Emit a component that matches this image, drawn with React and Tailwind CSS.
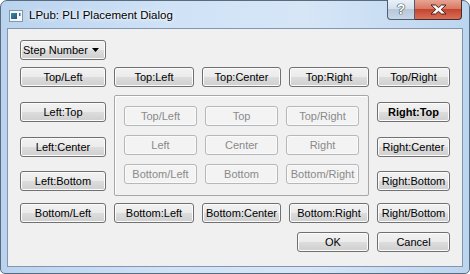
import React from 'react';

const btn =
  "h-[20px] flex items-center justify-center rounded-[3px] border border-[#707070] bg-[linear-gradient(to_bottom,#f2f2f2_0%,#ebebeb_50%,#dddddd_50%,#cfcfcf_100%)] shadow-[inset_0_0_0_1px_#fbfbfb] text-[11px] text-black leading-none";

const off =
  "h-[20px] flex items-center justify-center rounded-[3px] border border-[#b4b8bb] bg-[#f3f3f3] shadow-[inset_0_0_0_1px_#fafafa] text-[11px] text-[#8a8a8a] leading-none";

const Btn = ({ children, className = '' }) => (
  <div className={`${btn} ${className}`}>{children}</div>
);

const Off = ({ children }) => <div className={off}>{children}</div>;

const WindowIcon = () => (
  <svg width="14" height="12" viewBox="0 0 14 12">
    <rect x="0.5" y="0.5" width="13" height="11" fill="#f4f6f8" stroke="#8a96a3" />
    <defs>
      <linearGradient id="ic" x1="0" y1="0" x2="1" y2="1">
        <stop offset="0" stopColor="#2d8fa0" />
        <stop offset="1" stopColor="#2b4f8c" />
      </linearGradient>
    </defs>
    <rect x="2" y="3" width="6" height="6" fill="url(#ic)" />
    <rect x="10" y="3" width="1.5" height="3" fill="#3a6a9a" />
  </svg>
);

const CloseX = () => (
  <svg width="17" height="11" viewBox="0 0 17 11">
    <polygon
      points="1,1 5.5,1 8.5,3.6 11.5,1 16,1 11.2,5.5 16,10 11.5,10 8.5,7.4 5.5,10 1,10 5.8,5.5"
      fill="#ffffff"
      stroke="#4a1d16"
      strokeWidth="1"
      strokeLinejoin="round"
    />
  </svg>
);

export default function App() {
  return (
    <div className="w-[470px] h-[274px] bg-white font-['Liberation_Sans',Arial,sans-serif]">
      <div className="w-full h-full flex flex-col rounded-t-[7px] rounded-b-[5px] border border-[#5a6b80] bg-[linear-gradient(to_right,#b9d3ef_0%,#cfe2f6_35%,#d6e6f7_65%,#bcd5ef_100%)]">
        {/* title bar */}
        <div className="h-[27px] flex items-start shrink-0">
          <div className="ml-[8px] mt-[9px]">
            <WindowIcon />
          </div>
          <div className="ml-[6px] mt-[6px] text-[11.5px] text-black [text-shadow:0_0_6px_#fff,0_0_3px_#fff]">
            LPub: PLI Placement Dialog
          </div>
          <div className="ml-auto mr-[7px] -mt-[1px] flex h-[20px]">
            <div className="w-[28px] h-full flex items-center justify-center rounded-bl-[4px] border border-t-0 border-[#4c5d74] bg-[linear-gradient(to_bottom,#e9f0f8_0%,#d3dfec_50%,#b7c8dc_50%,#c9d7e6_100%)] text-[14px] font-bold text-white [text-shadow:0_0_1px_#233,0_0_1px_#233,0_0_1px_#233]">
              ?
            </div>
            <div className="w-[47px] h-full flex items-center justify-center rounded-br-[4px] border border-t-0 border-l-0 border-[#4c2a24] bg-[linear-gradient(to_bottom,#e8a493_0%,#d67560_50%,#c6452e_50%,#d6705a_100%)]">
              <CloseX />
            </div>
          </div>
        </div>

        {/* client area */}
        <div className="flex-1 mx-[6px] mb-[6px] border border-[#8396ae] bg-[#f0f0f0] pt-[11px] pl-[12px]">
          <div className="w-[430px] flex flex-col">
            <div className={`${btn} w-[86px] !justify-between px-[2px]`}>
              <span>Step Number</span>
              <svg width="7" height="4" viewBox="0 0 7 4" className="mr-[4px]">
                <polygon points="0,0 7,0 3.5,4" fill="#000" />
              </svg>
            </div>

            <div className="mt-[7px] grid grid-cols-[86px_80px_79px_80px_73px] gap-x-[8px]">
              <Btn>Top/Left</Btn>
              <Btn>Top:Left</Btn>
              <Btn>Top:Center</Btn>
              <Btn>Top:Right</Btn>
              <Btn>Top/Right</Btn>
            </div>

            <div className="mt-[8px] grid grid-cols-[86px_80px_79px_80px_73px] gap-x-[8px]">
              <div className="flex flex-col">
                <Btn className="mt-[7px]">Left:Top</Btn>
                <Btn className="mt-[15px]">Left:Center</Btn>
                <Btn className="mt-[14px]">Left:Bottom</Btn>
              </div>
              <div className="col-span-3 h-[101px] rounded-[2px] border border-[#a7a7a7] shadow-[inset_1px_1px_0_#ffffff] pt-[10px] px-[9px]">
                <div className="grid grid-cols-[73px_73px_73px] gap-x-[8px] gap-y-[9px]">
                  <Off>Top/Left</Off>
                  <Off>Top</Off>
                  <Off>Top/Right</Off>
                  <Off>Left</Off>
                  <Off>Center</Off>
                  <Off>Right</Off>
                  <Off>Bottom/Left</Off>
                  <Off>Bottom</Off>
                  <Off>Bottom/Right</Off>
                </div>
              </div>
              <div className="flex flex-col">
                <Btn className="mt-[7px] font-bold border-[#3c3c3c]">Right:Top</Btn>
                <Btn className="mt-[15px]">Right:Center</Btn>
                <Btn className="mt-[14px]">Right:Bottom</Btn>
              </div>
            </div>

            <div className="mt-[7px] grid grid-cols-[86px_80px_79px_80px_73px] gap-x-[8px]">
              <Btn>Bottom/Left</Btn>
              <Btn>Bottom:Left</Btn>
              <Btn>Bottom:Center</Btn>
              <Btn>Bottom:Right</Btn>
              <Btn>Right/Bottom</Btn>
            </div>

            <div className="mt-[9px] flex justify-end gap-x-[8px]">
              <Btn className="w-[72px] border-[#3c7fb1] shadow-[inset_0_0_0_1px_#bfe3f7]">OK</Btn>
              <Btn className="w-[73px]">Cancel</Btn>
            </div>
          </div>
        </div>
      </div>
    </div>
  );
}
